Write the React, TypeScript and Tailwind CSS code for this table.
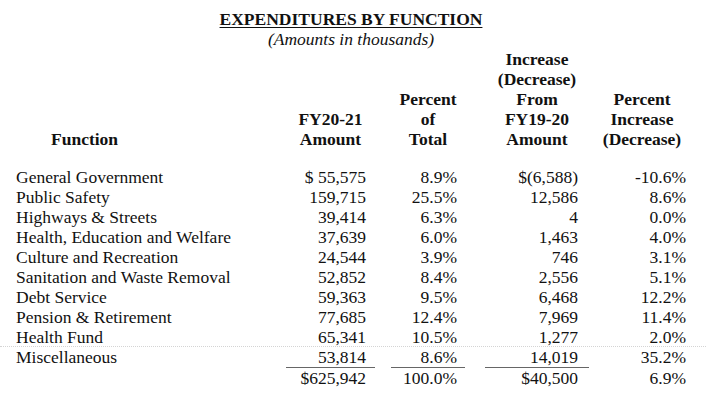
import React from 'react';

type Row = {
  name: string;
  amount: string;
  pct: string;
  change: string;
  pctChange: string;
};

const rows: Row[] = [
  { name: 'General Government', amount: '$ 55,575', pct: '8.9%', change: '$(6,588)', pctChange: '-10.6%' },
  { name: 'Public Safety', amount: '159,715', pct: '25.5%', change: '12,586', pctChange: '8.6%' },
  { name: 'Highways & Streets', amount: '39,414', pct: '6.3%', change: '4', pctChange: '0.0%' },
  { name: 'Health, Education and Welfare', amount: '37,639', pct: '6.0%', change: '1,463', pctChange: '4.0%' },
  { name: 'Culture and Recreation', amount: '24,544', pct: '3.9%', change: '746', pctChange: '3.1%' },
  { name: 'Sanitation and Waste Removal', amount: '52,852', pct: '8.4%', change: '2,556', pctChange: '5.1%' },
  { name: 'Debt Service', amount: '59,363', pct: '9.5%', change: '6,468', pctChange: '12.2%' },
  { name: 'Pension & Retirement', amount: '77,685', pct: '12.4%', change: '7,969', pctChange: '11.4%' },
  { name: 'Health Fund', amount: '65,341', pct: '10.5%', change: '1,277', pctChange: '2.0%' },
  { name: 'Miscellaneous', amount: '53,814', pct: '8.6%', change: '14,019', pctChange: '35.2%' },
];

// column boxes (the underlines in the total row span these)
const c1 = 'w-[270px] shrink-0';
const c2 = 'w-[89px] shrink-0 text-right pr-[9px]';
const c3 = 'ml-[16px] w-[74px] shrink-0 text-right pr-[8px]';
const c4 = 'ml-[20px] w-[104px] shrink-0 text-right pr-[11px]';
const c5 = 'ml-[9px] w-[88px] shrink-0 text-right';

const h2 = 'w-[89px] shrink-0 text-center';
const h3 = 'ml-[16px] w-[74px] shrink-0 text-center';
const h4 = 'ml-[20px] w-[104px] shrink-0 text-center';
const h5 = 'ml-[9px] w-[88px] shrink-0 text-center';

export default function App() {
  return (
    <div className="w-[706px] h-[405px] bg-white text-[#111] font-['Liberation_Serif',serif] text-[17.5px] leading-[20px] overflow-hidden">
      <div className="pt-[9px] text-center pr-[4px]">
        <div className="font-bold underline underline-offset-[2px] decoration-1">EXPENDITURES BY FUNCTION</div>
        <div className="italic">(Amounts in thousands)</div>
      </div>

      {/* header */}
      <div className="flex items-end pl-[16px] font-bold">
        <div className={`${c1} pl-[35px]`}>Function</div>
        <div className={h2}>
          <div>FY20-21</div>
          <div>Amount</div>
        </div>
        <div className={h3}>
          <div>Percent</div>
          <div>of</div>
          <div>Total</div>
        </div>
        <div className={h4}>
          <div>Increase</div>
          <div>(Decrease)</div>
          <div>From</div>
          <div>FY19-20</div>
          <div>Amount</div>
        </div>
        <div className={h5}>
          <div>Percent</div>
          <div>Increase</div>
          <div>(Decrease)</div>
        </div>
      </div>

      <div className="mt-[18px]">
        {rows.map((r) => (
          <div
            key={r.name}
            className={`flex h-[20px] pl-[16px] ${r.name === 'Health Fund' ? 'border-b border-dotted border-[#d4d4d4]' : ''}`}
          >
            <div className={c1}>{r.name}</div>
            <div className={c2}>{r.amount}</div>
            <div className={c3}>{r.pct}</div>
            <div className={c4}>{r.change}</div>
            <div className={c5}>{r.pctChange}</div>
          </div>
        ))}
        <div className="flex h-[21px] pl-[16px]">
          <div className={c1}></div>
          <div className={`${c2} border-t border-[#666]`}>$625,942</div>
          <div className={`${c3} border-t border-[#666]`}>100.0%</div>
          <div className={`${c4} border-t border-[#666]`}>$40,500</div>
          <div className={`${c5} pt-px`}>6.9%</div>
        </div>
      </div>
    </div>
  );
}
